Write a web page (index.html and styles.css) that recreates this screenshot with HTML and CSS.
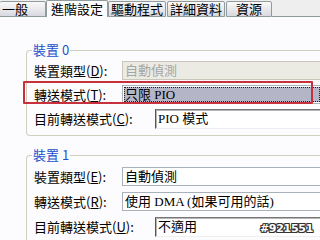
FILE: index.html
```html
<!DOCTYPE html>
<html lang="zh-Hant">
<head>
  <meta charset="UTF-8" />
  <title>IDE 通道內容</title>
  <link rel="stylesheet" href="styles.css">
</head>
<body>

  <!-- Tab strip -->
  <div class="tabs">
    <div class="tab tab-first">一般</div>
    <div class="tab tab-active">進階設定</div>
    <div class="tab">驅動程式</div>
    <div class="tab">詳細資料</div>
    <div class="tab tab-short">資源</div>
    <div class="tab-rest"></div>
  </div>

  <div class="panel">
    <fieldset class="group">
      <legend>裝置 0</legend>
      <div class="row">
        <span class="label">裝置類型(<u>D</u>):</span>
        <div class="combo combo-disabled">自動偵測</div>
      </div>
      <div class="row row-marked">
        <span class="label">轉送模式(<u>T</u>):</span>
        <div class="combo combo-focus"><span class="combo-sel">只限 PIO</span></div>
      </div>
      <div class="row">
        <span class="label label-wide">目前轉送模式(<u>C</u>):</span>
        <div class="readout">PIO 模式</div>
      </div>
    </fieldset>

    <fieldset class="group group-second">
      <legend>裝置 1</legend>
      <div class="row">
        <span class="label">裝置類型(<u>E</u>):</span>
        <div class="combo">自動偵測</div>
      </div>
      <div class="row">
        <span class="label">轉送模式(<u>R</u>):</span>
        <div class="combo">使用 DMA (如果可用的話)</div>
      </div>
      <div class="row">
        <span class="label label-wide">目前轉送模式(<u>U</u>):</span>
        <div class="readout">不適用</div>
      </div>
    </fieldset>
  </div>

  <div class="watermark">#921551</div>

</body>
</html>
```

FILE: styles.css
```css
body {
  margin: 0;
  width: 320px;
  height: 240px;
  overflow: hidden;
  background: #fcfcfe;
  font-family: "Noto Sans CJK TC", sans-serif;
  font-size: 13px;
  color: #000;
}

/* Tabs */
.tabs {
  display: flex;
  align-items: flex-end;
  height: 17px;
  background: #eeeeee;
}

.tab {
  box-sizing: border-box;
  height: 16px;
  margin-left: 1px;
  padding: 0 2px;
  line-height: 14px;
  border: 1px solid #919b9c;
  border-radius: 2px 2px 0 0;
  background: linear-gradient(#fafafa, #d8d8e0);
  white-space: nowrap;
}

.tab-first {
  margin-left: 0;
  padding: 0 17px 0 2px;
  border-left: none;
}

.tab-short {
  min-width: 46px;
  text-align: center;
}

.tab-active {
  height: 17px;
  margin-left: 0;
  padding: 1px 4px 0;
  border-bottom: none;
  background: #fcfcfe;
}

.tab-active + .tab {
  margin-left: 0;
}

.tab-rest {
  flex: 1;
  align-self: stretch;
  border-bottom: 1px solid #919b9c;
}

/* Panel and group boxes (right edge runs off the window) */
.panel {
  padding: 25px 0 0 26px;
}

.group {
  box-sizing: border-box;
  width: 294px;
  margin: 0;
  padding: 3px 0 7px 7px;
  border: 1px solid #d0d0bf;
  border-right: none;
  border-radius: 4px 0 0 4px;
}

.group legend {
  margin-left: -2px;
  padding: 0 1px;
  line-height: 16px;
  color: #2150cc;
}

.group-second {
  margin-top: 11px;
  padding-top: 4px;
}

.row {
  display: flex;
  align-items: center;
  height: 19px;
}

.row + .row {
  margin-top: 5px;
}

.group-second .row + .row {
  margin-top: 6px;
}

.label {
  flex: none;
  width: 88px;
  line-height: 17px;
  white-space: nowrap;
}

.label-wide {
  width: 121px;
}

.combo,
.readout {
  flex: 1;
  min-width: 0;
  box-sizing: border-box;
  height: 19px;
  padding: 0 2px;
  line-height: 17px;
  font-family: "Liberation Serif", "Noto Sans CJK TC", serif;
  white-space: nowrap;
  overflow: hidden;
  background: #fff;
  border: 1px solid #a9b1bb;
  border-right: none;
}

.combo-disabled {
  color: #a6a6a6;
  background: #ebebe4;
  border-color: #c9c7ba;
}

.combo-focus {
  padding: 1px 0 1px 1px;
}

.combo-sel {
  display: block;
  height: 15px;
  padding-left: 1px;
  line-height: 15px;
  background: #b4b6c8;
  outline: 1px dotted #222;
  outline-offset: -1px;
}

.readout {
  height: 20px;
  border-color: #777 #eee #eee #555;
  box-shadow: inset 1px 1px 0 #b5b5b5;
}

/* Red annotation around the transfer-mode row */
.row-marked {
  position: relative;
}

.row-marked::after {
  content: "";
  position: absolute;
  left: -11px;
  top: -4px;
  width: 290px;
  height: 23px;
  box-sizing: border-box;
  border: 2px solid #c8303c;
  border-radius: 1px;
  pointer-events: none;
}

.watermark {
  position: absolute;
  right: 7px;
  bottom: 5px;
  font-family: "DejaVu Sans", sans-serif;
  font-weight: bold;
  font-size: 11px;
  letter-spacing: -0.3px;
  color: #fff;
  text-shadow: 1px 0 0 #333, -1px 0 0 #333, 0 1px 0 #333, 0 -1px 0 #333,
    1px 1px 0 #333, -1px -1px 0 #333, 1px -1px 0 #333, -1px 1px 0 #333;
}
```
